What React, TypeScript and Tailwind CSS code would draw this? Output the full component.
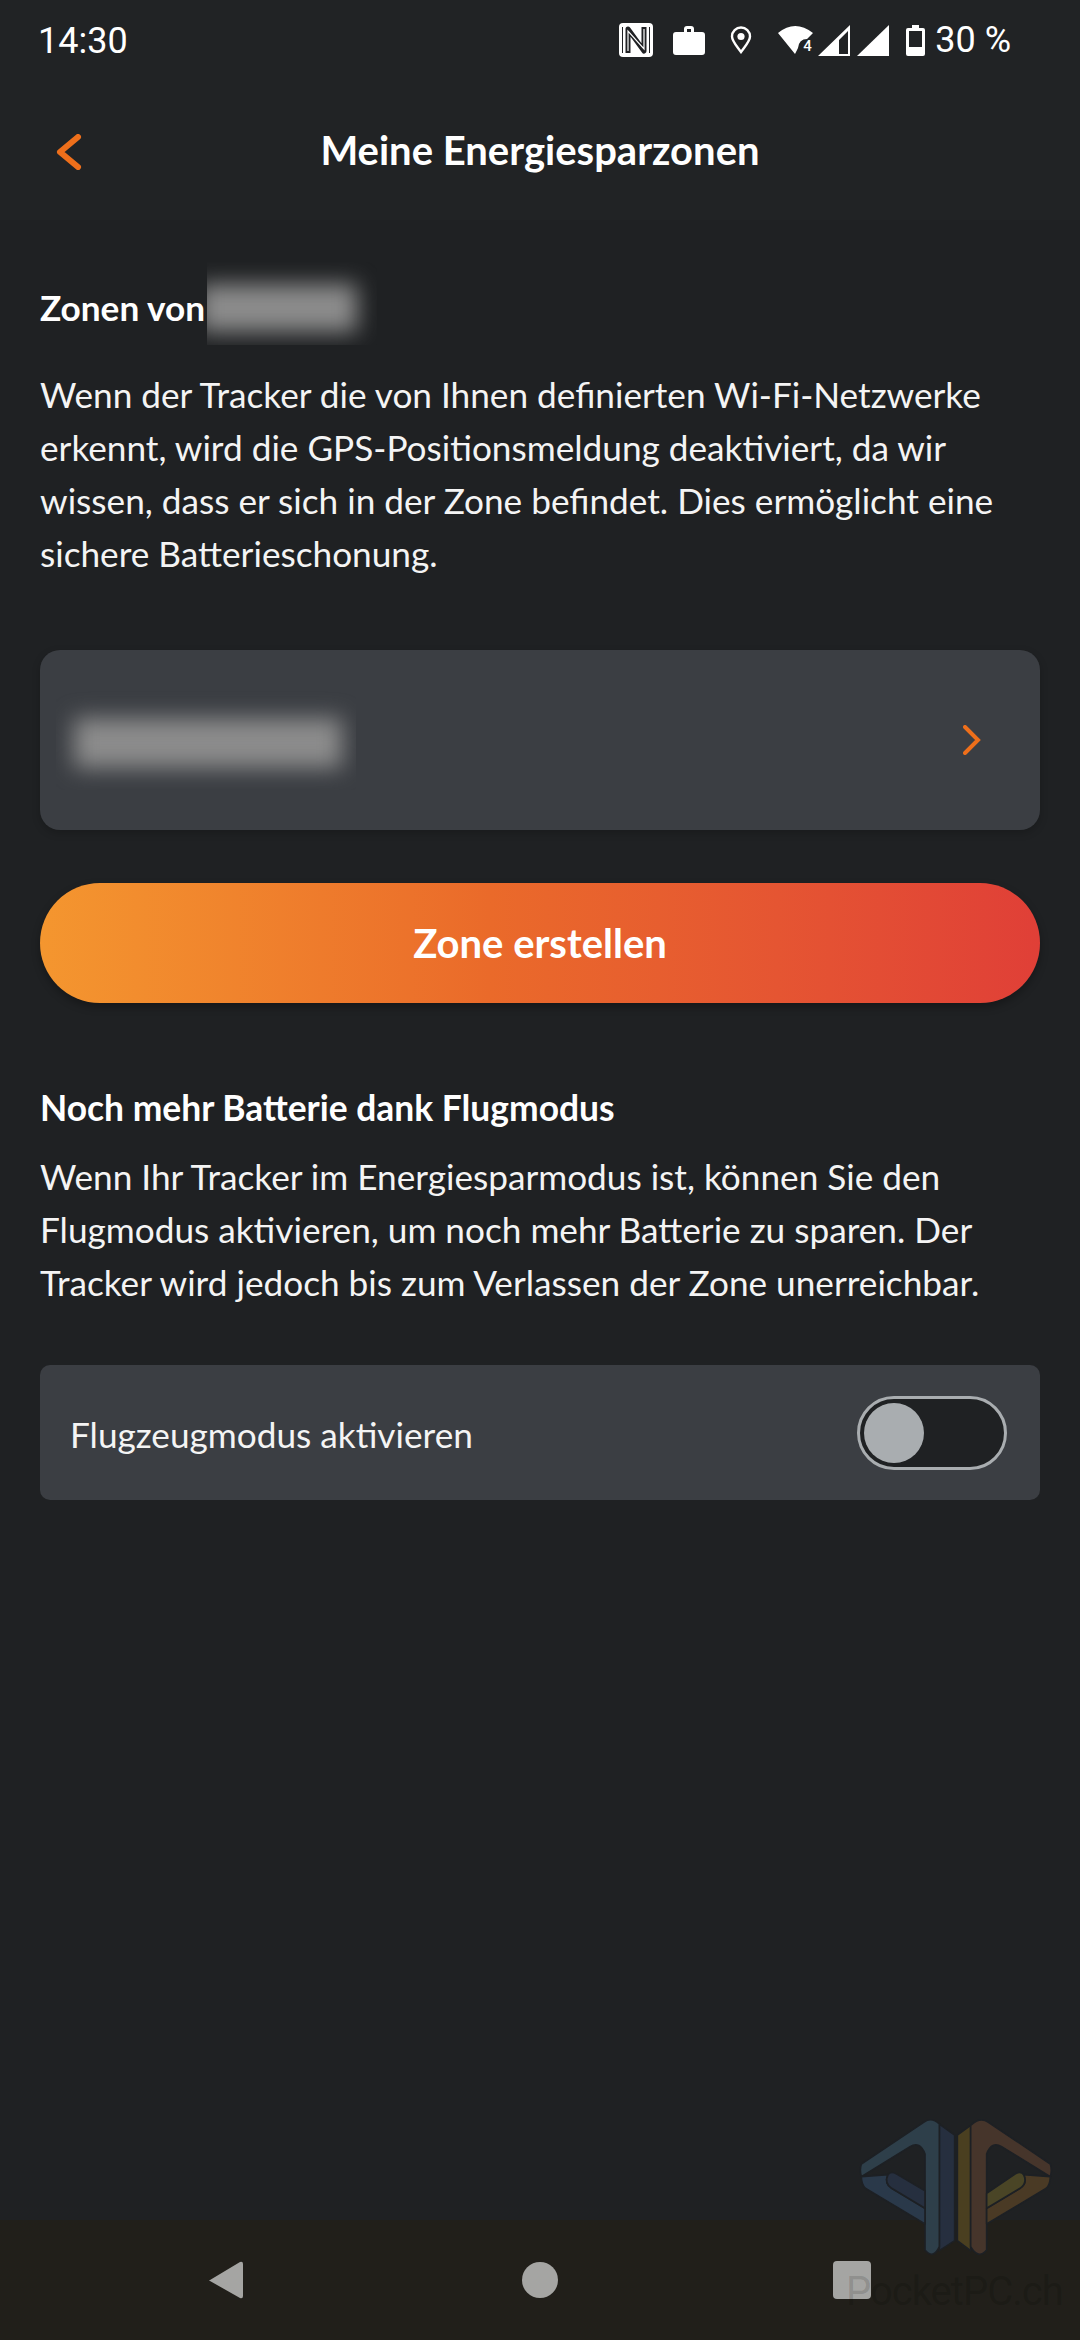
const Wordmark = () => (
  // faint site watermark lying over the bottom right corner
  <div className="absolute left-[760px] top-[2080px] h-[260px] w-[320px] pointer-events-none">
    <svg viewBox="0 0 960 780" className="absolute inset-0 h-full w-full">
      <g stroke="#1d2024" strokeWidth="5" strokeLinejoin="round">
        <path d="M538 132 L584 165 L584 482 L538 512 Z" fill="#262f3f" />
        <path d="M304 252 L492 126 Q515 110 538 132 L538 500 Q520 540 495 510 L495 222 Q480 182 450 200 L304 290 Q298 270 304 252 Z" fill="#2e3f4a" />
        <path d="M304 290 L384 284 Q372 310 395 325 L495 385 L495 432 L316 325 Q304 312 304 290 Z" fill="#2a394a" />
        <path d="M384 284 Q392 272 410 282 L495 332 L495 385 L395 325 Q372 310 384 284 Z" fill="#262f3f" />
        <path d="M632 136 L592 165 L592 482 L632 512 Z" fill="#4a3f20" />
        <path d="M871 252 L684 126 Q660 110 632 136 L632 500 Q655 540 680 510 L680 222 Q695 182 725 200 L871 290 Q877 270 871 252 Z" fill="#46352b" />
        <path d="M871 290 L791 284 Q803 310 780 325 L680 385 L680 432 L859 325 Q871 312 871 290 Z" fill="#4a3a25" />
        <path d="M791 284 Q783 272 765 282 L680 340 L680 385 L780 325 Q803 310 791 284 Z" fill="#4a4526" />
      </g>
    </svg>
    <span className="absolute left-[86px] top-[188px] font-['Roboto',sans-serif] text-[40px] leading-[48px] tracking-[-1px] text-black/15">
      PocketPC.ch
    </span>
  </div>
)

const StatusBar = () => (
  <div className="flex h-[80px] items-center font-['Roboto',sans-serif] text-[36px] text-white">
    <span className="ml-[38px] mt-[1px]">14:30</span>
    <div className="ml-auto mr-[69px] flex items-center">
      {/* nfc */}
      <svg viewBox="0 0 34 34" className="h-[34px] w-[34px]">
        <rect width="34" height="34" rx="4" fill="#fff" />
        <path d="M3.5 4 V30 M30.5 4 V30" fill="none" stroke="#202124" strokeWidth="1" />
        <path d="M9 30 V6 L25 28 V4" fill="none" stroke="#202124" strokeWidth="5" strokeLinejoin="round" />
        <path d="M9 28 V8 L25 26 V6" fill="none" stroke="#fff" strokeWidth="1.2" />
      </svg>
      {/* work profile */}
      <svg viewBox="0 0 32 29" className="ml-[20px] h-[29px] w-[32px]">
        <path d="M11 6 V3 Q11 0 14 0 H18 Q21 0 21 3 V6 H29 Q32 6 32 9 V26 Q32 29 29 29 H3 Q0 29 0 26 V9 Q0 6 3 6 Z M14 6 H18 V3 H14 Z" fill="#fff" fillRule="evenodd" />
      </svg>
      {/* location */}
      <svg viewBox="0 0 22 28" className="ml-[25px] h-[28px] w-[22px]">
        <path d="M11 26 C6 19 2 15 2 10.5 A9 9 0 0 1 20 10.5 C20 15 16 19 11 26 Z" fill="none" stroke="#fff" strokeWidth="2.4" />
        <circle cx="11" cy="10.5" r="3.6" fill="#fff" />
      </svg>
      {/* wifi with 4 */}
      <div className="relative ml-[26px] h-[30px] w-[35px]">
        <svg viewBox="0 0 35 30" className="h-[30px] w-[35px]">
          <path d="M0 8 Q17 -6 35 8 L29 14 Q21 14 20 23 L17 29 Z" fill="#fff" />
        </svg>
        <span className="absolute left-[25px] top-[13px] text-[15px] leading-[17px] font-medium">4</span>
      </div>
      {/* signal, one with an empty part */}
      <svg viewBox="0 0 32 31" className="ml-[5px] h-[31px] w-[32px]">
        <path d="M0 31 L32 0 V31 Z M21 29 H30 V6 L21 15 Z" fill="#fff" fillRule="evenodd" />
      </svg>
      <svg viewBox="0 0 32 31" className="ml-[7px] h-[31px] w-[32px]">
        <path d="M0 31 L32 0 V31 Z" fill="#fff" />
      </svg>
      {/* battery */}
      <svg viewBox="0 0 19 31" className="ml-[17px] h-[31px] w-[19px]">
        <path d="M6 0 H13 V3 H17 Q19 3 19 5 V29 Q19 31 17 31 H2 Q0 31 0 29 V5 Q0 3 2 3 H6 Z M3 6 V22 H16 V6 Z" fill="#fff" fillRule="evenodd" />
      </svg>
      <span className="ml-[10px]">30 %</span>
    </div>
  </div>
)

const Blur = ({ className, inner }: { className: string; inner: string }) => (
  <div className={`overflow-hidden relative ${className}`}>
    <div className={`absolute bg-[#8c8c8c] blur-[11px] ${inner}`} />
  </div>
)

const App = () => {
  return (
    <div className="relative flex h-[2340px] w-[1080px] flex-col overflow-hidden bg-[#1f2123] font-['Lato',sans-serif] text-white">
      {/* HEADER */}
      <div className="h-[220px] bg-[#212325]">
        <StatusBar />
        <div className="relative flex h-[140px] items-center justify-center">
          <svg viewBox="0 0 26 36" className="absolute left-[56px] top-[54px] h-[36px] w-[26px]">
            <path d="M22 3 L4 18 L22 33" fill="none" stroke="#ee6f1b" strokeWidth="6" strokeLinecap="round" strokeLinejoin="round" />
          </svg>
          <h1 className="text-[40px] font-bold leading-[44px]">Meine Energiesparzonen</h1>
        </div>
      </div>

      {/* CONTENT */}
      <div className="flex flex-1 flex-col px-[40px]">
        <div className="mt-[42px] flex h-[83px] items-center">
          <span className="text-[35.2px] font-bold leading-[40px] mt-[6px]">Zonen von</span>
          <Blur className="ml-[2px] h-[83px] w-[170px]" inner="left-[-8px] top-[22px] h-[48px] w-[158px]" />
        </div>
        <p className="mt-[23px] text-[35.2px] leading-[53px] text-[#f4f4f4]">
          Wenn der Tracker die von Ihnen definierten Wi-Fi-Netzwerke
          <br />
          erkennt, wird die GPS-Positionsmeldung deaktiviert, da wir
          <br />
          wissen, dass er sich in der Zone befindet. Dies ermöglicht eine
          <br />
          sichere Batterieschonung.
        </p>

        <div className="mt-[70px] flex h-[180px] items-center justify-between rounded-[20px] bg-[#3b3e43] shadow-[0_3px_8px_rgba(0,0,0,0.2)]">
          <Blur className="ml-[16px] h-[100px] w-[300px]" inner="left-[18px] top-[28px] h-[50px] w-[268px]" />
          <svg viewBox="0 0 18 30" className="mr-[59px] h-[30px] w-[18px]">
            <path d="M2 2 L15 15 L2 28" fill="none" stroke="#ee6f1b" strokeWidth="4" strokeLinecap="round" />
          </svg>
        </div>

        <button className="mt-[53px] flex h-[120px] items-center justify-center rounded-full bg-gradient-to-r from-[#f4962f] via-[#ea6a2a] via-45% to-[#e03f37] text-[40px] font-bold shadow-[0_4px_8px_rgba(0,0,0,0.3)]">
          Zone erstellen
        </button>

        <h2 className="mt-[85px] text-[35.4px] font-bold leading-[40px]">Noch mehr Batterie dank Flugmodus</h2>
        <p className="mt-[22px] text-[35.2px] leading-[53px] text-[#f4f4f4]">
          Wenn Ihr Tracker im Energiesparmodus ist, können Sie den
          <br />
          Flugmodus aktivieren, um noch mehr Batterie zu sparen. Der
          <br />
          Tracker wird jedoch bis zum Verlassen der Zone unerreichbar.
        </p>

        <div className="mt-[56px] flex h-[135px] items-center justify-between rounded-[10px] bg-[#3b3e43] pl-[30px] pr-[33px]">
          <span className="mt-[3px] text-[35.2px] text-[#f4f4f4]">Flugzeugmodus aktivieren</span>
          <div className="flex h-[74px] w-[150px] items-center rounded-full border-[3px] border-[#a9adb0] bg-[#1f2123] pl-[4px]">
            <div className="h-[60px] w-[60px] rounded-full bg-[#a9adb0]" />
          </div>
        </div>
      </div>

      {/* NAV BAR */}
      <div className="flex h-[120px] items-center bg-[#211f1a] pl-[208px]">
        <svg viewBox="0 0 35 40" className="h-[40px] w-[35px]">
          <path d="M2 20 L32 2 Q35 1 35 4 V36 Q35 39 32 38 L2 21 Q0 20 2 20 Z" fill="#a5a5a3" />
        </svg>
        <div className="ml-[279px] h-[36px] w-[36px] rounded-full bg-[#a5a5a3]" />
        <div className="ml-[275px] h-[38px] w-[38px] rounded-[4px] bg-[#a5a5a3]" />
      </div>

      <Wordmark />
    </div>
  )
}

export default App
